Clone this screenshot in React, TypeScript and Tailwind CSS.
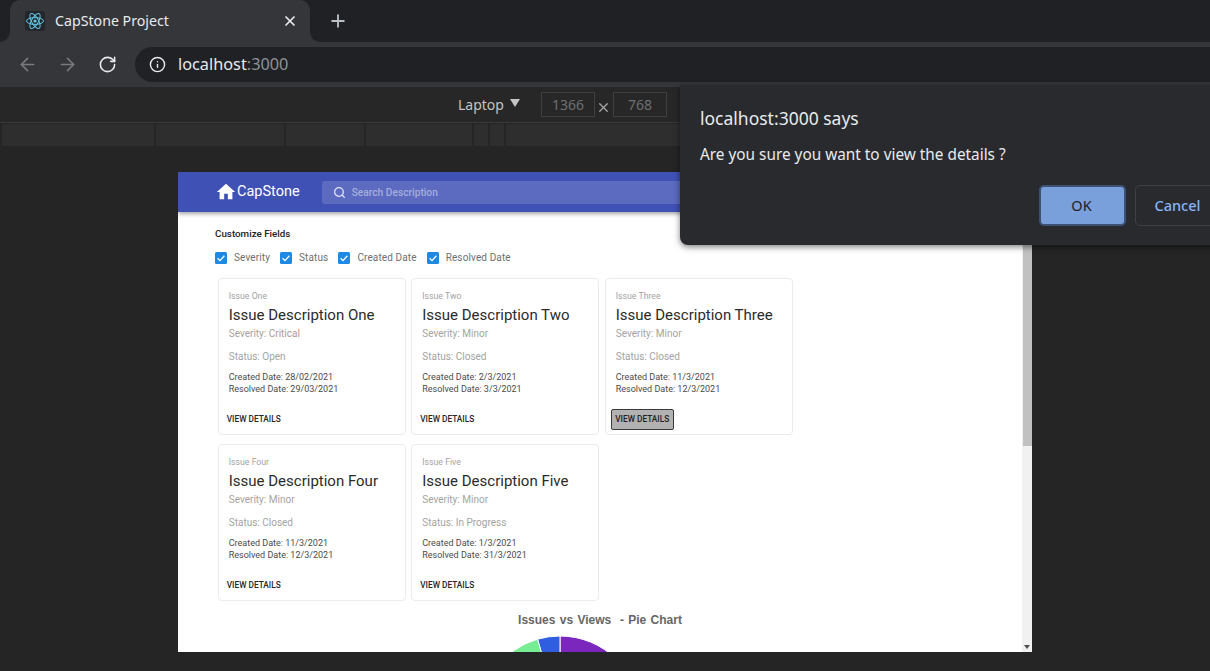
import React, { FC } from "react";
import { ArrowLeft, ArrowRight, Info, Plus, RotateCw, Search, X } from "lucide-react";

interface Issue {
  label: string;
  title: string;
  severity: string;
  status: string;
  created: string;
  resolved: string;
  focused?: boolean;
}

const ISSUES: Issue[] = [
  { label: "Issue One", title: "Issue Description One", severity: "Critical", status: "Open", created: "28/02/2021", resolved: "29/03/2021" },
  { label: "Issue Two", title: "Issue Description Two", severity: "Minor", status: "Closed", created: "2/3/2021", resolved: "3/3/2021" },
  { label: "Issue Three", title: "Issue Description Three", severity: "Minor", status: "Closed", created: "11/3/2021", resolved: "12/3/2021", focused: true },
  { label: "Issue Four", title: "Issue Description Four", severity: "Minor", status: "Closed", created: "11/3/2021", resolved: "12/3/2021" },
  { label: "Issue Five", title: "Issue Description Five", severity: "Minor", status: "In Progress", created: "1/3/2021", resolved: "31/3/2021" },
];

const FIELDS = ["Severity", "Status", "Created Date", "Resolved Date"];
const RULER = [152, 128, 78, 106, 14, 14];

const ReactLogo = () => (
  <svg width="20" height="20" viewBox="0 0 20 20" fill="none" stroke="#61c8e6" strokeWidth="1">
    <rect width="20" height="20" rx="2" fill="#23272c" stroke="none" />
    <ellipse cx="10" cy="10" rx="8.5" ry="3.4" />
    <ellipse cx="10" cy="10" rx="8.5" ry="3.4" transform="rotate(60 10 10)" />
    <ellipse cx="10" cy="10" rx="8.5" ry="3.4" transform="rotate(120 10 10)" />
    <circle cx="10" cy="10" r="1.6" fill="#61c8e6" stroke="none" />
  </svg>
);

const HomeIcon = () => (
  <svg width="22" height="22" viewBox="0 0 24 24" fill="#ffffff">
    <path d="M10 20v-6h4v6h5v-8h3L12 3 2 12h3v8z" />
  </svg>
);

const CheckBox = ({ label }: { label: string }) => (
  <div className="flex items-center gap-[7px]">
    <svg width="12" height="12" viewBox="0 0 12 12">
      <rect width="12" height="12" rx="1.5" fill="#1e88e5" />
      <path d="M2.6 6.2l2.4 2.4 4.4-4.8" fill="none" stroke="#ffffff" strokeWidth="1.3" />
    </svg>
    <span className="text-[10px] leading-none tracking-[0.12px] text-[#6f6f6f]">{label}</span>
  </div>
);

const IssueCard: FC<{ issue: Issue }> = ({ issue }) => (
  <div className="flex h-[157px] w-[188px] flex-col rounded border border-[#ebebeb] bg-white pl-[10px] pt-[11px]">
    <p className="text-[8.7px] leading-[12px] text-[#a3a3a3]">{issue.label}</p>
    <h2 className="mt-[3px] whitespace-nowrap text-[15px] leading-[20px] text-[#2b2b2b]">{issue.title}</h2>
    <p className="mt-[2px] text-[10px] leading-[14px] text-[#a3a3a3]">
      Severity: <span className={issue.severity === "Critical" ? "text-[#b09a8e]" : "text-[#a8a39c]"}>{issue.severity}</span>
    </p>
    <p className="mt-[9px] text-[10px] leading-[14px] text-[#a3a3a3]">Status: {issue.status}</p>
    <p className="mt-[7px] text-[9px] leading-[12px] text-[#4b4b4b]">Created Date: {issue.created}</p>
    <p className="text-[9px] leading-[12px] text-[#4b4b4b]">Resolved Date: {issue.resolved}</p>
    <div className="ml-[-2px] mt-[18px] flex">
      {issue.focused ? (
        <button className="ml-[-3px] mt-[-4px] h-[21px] w-[63px] rounded-[2px] border border-[#3a3a3a] bg-[#b2b2b2] text-[8.3px] font-medium text-[#222222]">
          VIEW DETAILS
        </button>
      ) : (
        <button className="text-[8.3px] font-medium leading-[12px] text-[#262626]">VIEW DETAILS</button>
      )}
    </div>
  </div>
);

const PieChart = () => (
  <svg width="170" height="16" viewBox="0 0 170 16" className="shrink-0">
    <g stroke="#ffffff" strokeWidth="1">
      <path d="M85 80 L85 0 A80 80 0 0 1 165 80 Z" fill="#7b27bd" />
      <path d="M85 80 L62.5 3.2 A80 80 0 0 1 85 0 Z" fill="#2f5fe0" />
      <path d="M85 80 L5 80 A80 80 0 0 1 62.5 3.2 Z" fill="#76ec93" />
    </g>
  </svg>
);

export default function App() {
  return (
    <div className="relative flex h-[671px] w-[1210px] flex-col overflow-hidden bg-[#252525] font-['Noto_Sans',sans-serif]">
      {/* tab strip */}
      <div className="flex h-[42px] shrink-0 items-center bg-[#202124]">
        <div className="relative ml-[10px] flex h-[42px] w-[300px] items-center self-end rounded-t-[10px] bg-[#35363a] pl-[15px]">
          <span className="absolute bottom-0 left-[-10px] h-[10px] w-[10px] bg-[#35363a]">
            <span className="block h-full w-full rounded-br-[10px] bg-[#202124]" />
          </span>
          <span className="absolute bottom-0 right-[-10px] h-[10px] w-[10px] bg-[#35363a]">
            <span className="block h-full w-full rounded-bl-[10px] bg-[#202124]" />
          </span>
          <ReactLogo />
          <span className="ml-[10px] text-[14.2px] text-[#e8eaed]">CapStone Project</span>
          <X className="ml-auto mr-[12px]" size={16} strokeWidth={2.6} color="#e8eaed" />
        </div>
        <Plus className="ml-[18px]" size={20} strokeWidth={2.2} color="#bdc1c6" />
      </div>

      {/* address bar */}
      <div className="flex h-[45px] shrink-0 items-center bg-[#35363a] pl-[17px]">
        <ArrowLeft size={21} strokeWidth={1.8} color="#797b7f" />
        <ArrowRight className="ml-[19px]" size={21} strokeWidth={1.8} color="#797b7f" />
        <RotateCw className="ml-[20px]" size={19} strokeWidth={2} color="#e8eaed" />
        <div className="ml-[18px] flex h-[35px] flex-1 items-center rounded-l-full bg-[#202124] pl-[14px]">
          <Info size={17} strokeWidth={2} color="#e8eaed" />
          <span className="ml-[12px] text-[16.3px] text-[#e8eaed]">
            localhost<span className="text-[#8f9296]">:3000</span>
          </span>
        </div>
      </div>

      {/* device toolbar */}
      <div className="flex h-[36px] shrink-0 items-center border-b border-[#3a3a3a] bg-[#272727] pl-[458px]">
        <span className="text-[14px] text-[#c4c4c4]">Laptop</span>
        <div className="ml-[6px] mt-[-3px] h-0 w-0 border-x-[5px] border-t-[8px] border-x-transparent border-t-[#c4c4c4]" />
        <div className="ml-[21px] flex h-[25px] w-[54px] items-center justify-center border border-[#3f3f3f] text-[14px] text-[#6f6f6f]">1366</div>
        <X className="mx-[1.5px] mt-[5px]" size={15} strokeWidth={2} color="#a8a8a8" />
        <div className="flex h-[25px] w-[54px] items-center justify-center border border-[#3f3f3f] text-[14px] text-[#6f6f6f]">768</div>
      </div>

      {/* ruler */}
      <div className="mt-[1px] flex h-[22px] shrink-0 gap-[2px] bg-[#252525] pl-[2px]">
        {RULER.map((width, i) => (
          <div key={i} className="bg-[#2e2e2e]" style={{ width }} />
        ))}
        <div className="flex-1 bg-[#2e2e2e]" />
      </div>

      {/* emulated page */}
      <div className="ml-[178px] mt-[26px] flex h-[480px] w-[854px] overflow-hidden bg-white font-['Roboto',sans-serif]">
        <div className="min-w-0 flex-1">
          <header className="flex h-[40px] items-center bg-[#3f51b5] pl-[37px] shadow-[0_2px_4px_rgba(0,0,0,0.35)]">
            <HomeIcon />
            <span className="text-[14.5px] text-white">CapStone</span>
            <div className="ml-[22px] flex h-[23px] w-[500px] items-center rounded-[3px] bg-[#5c6bc0] pl-[11px]">
              <Search size={13} strokeWidth={2.4} color="#e3e6f5" />
              <span className="ml-[6px] mt-[1px] text-[10.2px] font-medium text-[#a5aedd]">Search Description</span>
            </div>
          </header>
          <div className="pl-[37px] pt-[16px]">
            <p className="text-[9.8px] font-medium leading-[12px] text-[#222222]">Customize Fields</p>
            <div className="mt-[12px] flex gap-[10px]">
              {FIELDS.map((field) => (
                <CheckBox key={field} label={field} />
              ))}
            </div>
          </div>
          <div className="ml-[39.75px] mt-[14px] flex w-[582px] flex-wrap gap-x-[5.5px] gap-y-[9px]">
            {ISSUES.map((issue) => (
              <IssueCard key={issue.label} issue={issue} />
            ))}
          </div>
          <p className="mt-[12px] text-center font-['Liberation_Sans',sans-serif] text-[12px] font-bold leading-[14px] text-[#666666] [word-spacing:1px]">
            Issues vs Views&nbsp; - Pie Chart
          </p>
          <div className="mr-[80px] mt-[9px] flex justify-center">
            <PieChart />
          </div>
        </div>

        {/* scrollbar */}
        <div className="flex w-[10px] shrink-0 flex-col items-center bg-[#f1f1f1]">
          <div className="h-[274px] w-[9px] bg-[#c1c1c1]" />
          <div className="mt-auto mb-[3px] h-0 w-0 border-x-[3px] border-t-[4px] border-x-transparent border-t-[#505050]" />
        </div>
      </div>

      {/* alert dialog */}
      <div className="absolute left-[680px] top-[85px] h-[160px] w-[545px] rounded-bl-[8px] bg-[#292a2d] pl-[20px] pt-[20px] shadow-[0_2px_6px_rgba(0,0,0,0.5)]">
        <p className="text-[17.5px] leading-[26px] text-[#e8eaed]">localhost:3000 says</p>
        <p className="mt-[13px] text-[15.35px] leading-[20px] text-[#e8eaed]">Are you sure you want to view the details ?</p>
        <div className="mt-[21px] flex gap-[9px] pl-[339px]">
          <button className="h-[41px] w-[87px] rounded-[5px] border-2 border-[#3f5172] bg-[#7aa0dc] pr-[2px] text-[14.5px] text-[#202124]">OK</button>
          <button className="h-[41px] w-[85px] rounded-[5px] border border-[#3c4043] text-[14.5px] font-medium text-[#8ab4f8]">Cancel</button>
        </div>
      </div>
    </div>
  );
}
